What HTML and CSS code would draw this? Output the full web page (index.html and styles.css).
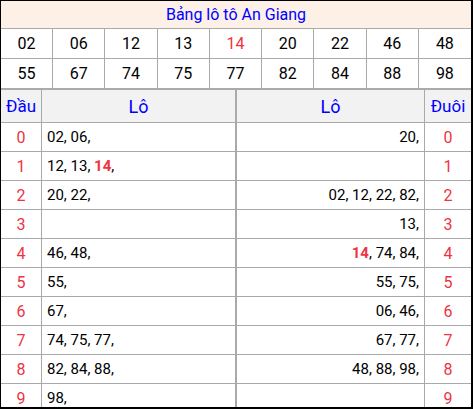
FILE: index.html
```html
<!DOCTYPE html>
<html lang="vi">
<head>
<meta charset="utf-8">
<link rel="stylesheet" href="styles.css">
</head>
<body>
<div class="board">
  <div class="title">Bảng lô tô An Giang</div>
  <div class="nums">
    <div class="n">02</div><div class="n">06</div><div class="n">12</div><div class="n">13</div><div class="n red">14</div><div class="n">20</div><div class="n">22</div><div class="n">46</div><div class="n">48</div>
  </div>
  <div class="nums last">
    <div class="n">55</div><div class="n">67</div><div class="n">74</div><div class="n">75</div><div class="n">77</div><div class="n">82</div><div class="n">84</div><div class="n">88</div><div class="n">98</div>
  </div>
  <div class="lt">
    <div class="h c1">Đầu</div><div class="h c2">Lô</div><div class="h c3">Lô</div><div class="h c4">Đuôi</div>

    <div class="d c1">0</div><div class="l c2"><span>02, 06,</span></div><div class="r c3"><span>20,</span></div><div class="d c4">0</div>
    <div class="d c1">1</div><div class="l c2"><span>12, 13, <b>14</b>,</span></div><div class="r c3"></div><div class="d c4">1</div>
    <div class="d c1">2</div><div class="l c2"><span>20, 22,</span></div><div class="r c3"><span>02, 12, 22, 82,</span></div><div class="d c4">2</div>
    <div class="d c1">3</div><div class="l c2"></div><div class="r c3"><span>13,</span></div><div class="d c4">3</div>
    <div class="d c1">4</div><div class="l c2"><span>46, 48,</span></div><div class="r c3"><span><b>14</b>, 74, 84,</span></div><div class="d c4">4</div>
    <div class="d c1">5</div><div class="l c2"><span>55,</span></div><div class="r c3"><span>55, 75,</span></div><div class="d c4">5</div>
    <div class="d c1">6</div><div class="l c2"><span>67,</span></div><div class="r c3"><span>06, 46,</span></div><div class="d c4">6</div>
    <div class="d c1">7</div><div class="l c2"><span>74, 75, 77,</span></div><div class="r c3"><span>67, 77,</span></div><div class="d c4">7</div>
    <div class="d c1">8</div><div class="l c2"><span>82, 84, 88,</span></div><div class="r c3"><span>48, 88, 98,</span></div><div class="d c4">8</div>
    <div class="d c1">9</div><div class="l c2"><span>98,</span></div><div class="r c3"></div><div class="d c4">9</div>
  </div>
</div>
</body>
</html>
```
FILE: styles.css
```css
* { box-sizing: border-box; }
html, body { margin: 0; padding: 0; background: #fff; }
body { font-family: Roboto, "Liberation Sans", sans-serif; color: #000; }

.board {
  width: 473px;
  height: 409px;
  overflow: hidden;
  border-style: solid;
  border-color: #000;
  border-width: 1px 2px 2px 1px;
}

.title {
  height: 28px;
  background: #fdf1e7;
  border-bottom: 1px solid #aaa;
  color: #0000ff;
  font-size: 16px;
  text-align: center;
  line-height: 27px;
}

.nums {
  display: grid;
  grid-template-columns: repeat(9, 1fr);
  height: 30px;
  border-bottom: 1px solid #aaa;
}
.nums.last { height: 31px; border-bottom-width: 2px; }
.n {
  display: flex;
  align-items: center;
  justify-content: center;
  font-size: 16px;
  border-right: 1px solid #aaa;
}
.n:last-child { border-right: 0; }
.red { color: #f0323c; }

.lt {
  display: grid;
  grid-template-columns: 41px 194px 189px 46px;
  grid-auto-rows: 29px;
  grid-template-rows: 33px;
}
.lt > div {
  border-bottom: 1px solid #aaa;
  display: flex;
  align-items: center;
}
.c1, .c2 { border-right: 1px solid #aaa; }
.c3 { border-left: 1px solid #aaa; border-right: 1px solid #aaa; }

.h {
  background: #f2f2f2;
  color: #0000ff;
  justify-content: center;
  font-size: 18px;
}
.h.c1, .h.c4 { font-size: 17px; }

.d {
  justify-content: center;
  color: #ee3344;
  font-size: 16px;
}
.l, .r { font-size: 15px; }
.l { padding-left: 5px; }
.r { justify-content: flex-end; padding-right: 5px; }
b { color: #ee3344; font-weight: 700; }
```
